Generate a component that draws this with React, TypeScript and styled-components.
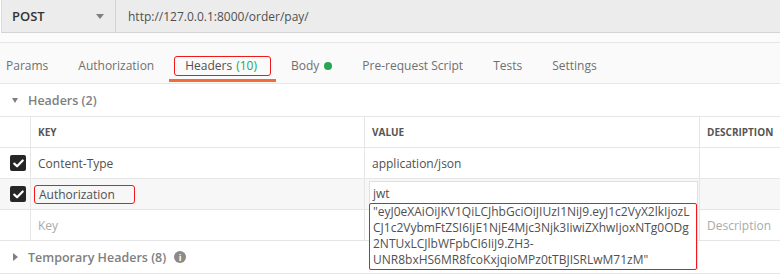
import React from 'react'
import styled, { createGlobalStyle } from 'styled-components';

const GlobalStyle = createGlobalStyle`
    body {
        margin: 0;
        background: #ffffff;
        font-family: "Open Sans", "Liberation Sans", sans-serif;
        font-size: 12px;
        color: #505050;
    }
`

type HeaderRow = {
    key: string;
    value: string;
};

const rows: Array<HeaderRow> = [
    { key: 'Content-Type', value: 'application/json' },
];

const tabs = ['Params', 'Authorization', 'Headers', 'Body', 'Pre-request Script', 'Tests', 'Settings'];

// the editor wraps the token like this in the screenshot
const tokenLines = [
    '"eyJ0eXAiOiJKV1QiLCJhbGciOiJIUzI1NiJ9.eyJ1c2VyX2lkIjozL',
    'CJ1c2VybmFtZSI6IjE1NjE4Mjc3Njk3IiwiZXhwIjoxNTg0ODg',
    '2NTUxLCJlbWFpbCI6IiJ9.ZH3-',
    'UNR8bxHS6MR8fcoKxjqioMPz0tTBJISRLwM71zM"',
];

function Checkbox() {
    return (
        <CheckBox>
            <svg width="11" height="9" viewBox="0 0 11 9">
                <path d="M1.3 4.6 L4.1 7.3 L9.7 1.5" fill="none" stroke="#fff" strokeWidth="2.2" strokeLinecap="round" strokeLinejoin="round"/>
            </svg>
        </CheckBox>
    )
}

function App() {
    return (
        <Page>
            <GlobalStyle/>
            <RequestBar>
                <MethodSelect>
                    <span>POST</span>
                    <Caret/>
                </MethodSelect>
                <UrlText>http://127.0.0.1:8000/order/pay/</UrlText>
            </RequestBar>
            <Spacer/>
            <TabBar>
                {tabs.map((tab) => (
                    <Tab key={tab} active={tab === 'Headers'}>
                        {tab === 'Headers' ? (
                            <Marked>Headers <Count>(10)</Count></Marked>
                        ) : tab}
                        {tab === 'Body' && <Dot/>}
                    </Tab>
                ))}
            </TabBar>
            <SectionTitle>
                <Arrow open/>
                Headers (2)
            </SectionTitle>
            <Table>
                <Cell/>
                <HeadCell>KEY</HeadCell>
                <HeadCell>VALUE</HeadCell>
                <HeadCell>DESCRIPTION</HeadCell>

                {rows.map((row) => (
                    <React.Fragment key={row.key}>
                        <CheckCell><Checkbox/></CheckCell>
                        <Cell>{row.key}</Cell>
                        <Cell>{row.value}</Cell>
                        <Cell/>
                    </React.Fragment>
                ))}

                <CheckCell hover><Checkbox/></CheckCell>
                <Cell hover><KeyMark>Authorization</KeyMark></Cell>
                <ValueCell hover>
                    <Editor>
                        <EditorLine>jwt</EditorLine>
                        <TokenBox>
                            {tokenLines.map((line) => (
                                <div key={line}>{line}</div>
                            ))}
                        </TokenBox>
                    </Editor>
                </ValueCell>
                <Cell hover/>

                <Cell/>
                <Cell><Placeholder>Key</Placeholder></Cell>
                <Cell/>
                <Cell><Placeholder>Description</Placeholder></Cell>
            </Table>
            <SectionTitle bordered>
                <Arrow/>
                Temporary Headers (8)
                <Info>i</Info>
            </SectionTitle>
        </Page>
    )
}

export default App

const Page = styled.div`
    width: 780px;
    height: 275px;
    overflow: hidden;
    background: #fff;
`

const RequestBar = styled.div`
    display: flex;
    height: 32px;
    margin-left: 1px;
    background: #ececec;
    border-bottom: 1px solid #d4d4d4;
    border-left: 1px solid #dcdcdc;
`

const MethodSelect = styled.div`
    width: 114px;
    display: flex;
    align-items: center;
    justify-content: space-between;
    padding: 0 11px 0 10px;
    box-sizing: border-box;
    border-right: 1px solid #d4d4d4;
    color: #333;
    font-weight: 600;
    font-size: 13px;
`

const Caret = styled.span`
    width: 0;
    height: 0;
    border-left: 4px solid transparent;
    border-right: 4px solid transparent;
    border-top: 5px solid #808080;
`

const UrlText = styled.div`
    display: flex;
    align-items: center;
    padding-left: 12px;
    color: #505050;
    font-size: 12px;
`

const Spacer = styled.div`
    height: 9px;
    background: #fbfbfb;
    border-bottom: 1px solid #e6e6e6;
`

const TabBar = styled.div`
    display: flex;
    height: 40px;
    margin-left: -9px;
    background: #fafafa;
    border-bottom: 1px solid #e6e6e6;
`

const Tab = styled.div<{ active?: boolean }>`
    display: flex;
    align-items: center;
    box-sizing: border-box;
    height: 39px;
    padding: 9px 15px 0;
    color: #707070;
    font-size: 12px;
    border-bottom: 3px solid ${(p) => (p.active ? '#f26b3a' : 'transparent')};
    white-space: nowrap;
`

const Marked = styled.span`
    display: inline-flex;
    align-items: center;
    gap: 4px;
    height: 18px;
    margin: 0 -10px;
    padding: 0 13px 0 10px;
    border: 1px solid #f01818;
    border-radius: 3px;
    color: #505050;
`

const Count = styled.span`
    color: #26a652;
`

const Dot = styled.span`
    width: 8px;
    height: 8px;
    border-radius: 50%;
    background: #26a652;
    margin-left: 5px;
`

const SectionTitle = styled.div<{ bordered?: boolean }>`
    display: flex;
    align-items: center;
    height: 32px;
    padding-left: 12px;
    color: #808080;
    font-weight: 600;
    font-size: 12.5px;
    ${(p) => p.bordered && 'border-bottom: 1px solid #e6e6e6;'}
`

const Arrow = styled.span<{ open?: boolean }>`
    width: 0;
    height: 0;
    margin-right: 10px;
    ${(p) => p.open
        ? `border-left: 3.5px solid transparent;
           border-right: 3.5px solid transparent;
           border-top: 5px solid #808080;`
        : `border-top: 4px solid transparent;
           border-bottom: 4px solid transparent;
           border-left: 5px solid #808080;
           margin-left: 1px;`}
`

const Info = styled.span`
    display: inline-flex;
    align-items: center;
    justify-content: center;
    width: 12px;
    height: 12px;
    margin-left: 8px;
    border-radius: 50%;
    background: #8a8a8a;
    color: #fff;
    font-size: 9px;
    font-weight: 700;
`

const Table = styled.div`
    display: grid;
    grid-template-columns: 31px 334px 335px 1fr;
    grid-auto-rows: 31px;
    border-top: 1px solid #e6e6e6;
`

const Cell = styled.div<{ hover?: boolean }>`
    display: flex;
    align-items: center;
    padding-left: 7px;
    border-bottom: 1px solid #e6e6e6;
    border-right: 1px solid #e6e6e6;
    background: ${(p) => (p.hover ? '#f7f7f7' : '#fff')};
    color: #505050;
    font-size: 12px;
    white-space: nowrap;
    &:nth-child(4n) {
        border-right: none;
    }
`

const HeadCell = styled(Cell)`
    font-size: 10px;
    font-weight: 700;
    color: #555;
`

const CheckCell = styled(Cell)`
    padding-left: 10px;
`

const ValueCell = styled(Cell)`
    position: relative;
    padding-left: 0;
`

const CheckBox = styled.span`
    display: inline-flex;
    align-items: center;
    justify-content: center;
    width: 16px;
    height: 16px;
    border-radius: 2px;
    background: #262626;
`

const KeyMark = styled.span`
    display: inline-flex;
    align-items: center;
    height: 17px;
    margin-left: -4px;
    padding: 0 19px 0 4px;
    border: 1px solid #f01818;
    border-radius: 3px;
`

const Placeholder = styled.span`
    color: #aaaaaa;
`

const Editor = styled.div`
    position: absolute;
    top: 2px;
    left: 4px;
    width: 327px;
    background: #fff;
    border: 1px solid #e0e0e0;
    border-bottom: none;
    z-index: 2;
`

const EditorLine = styled.div`
    padding: 3px 0 0 3px;
    height: 18px;
    line-height: 18px;
`

const TokenBox = styled.div`
    margin-left: -1px;
    padding: 0 3px 1px 3px;
    border: 1px solid #f01818;
    border-radius: 2px;
    line-height: 16px;
    white-space: nowrap;
    color: #505050;
`
